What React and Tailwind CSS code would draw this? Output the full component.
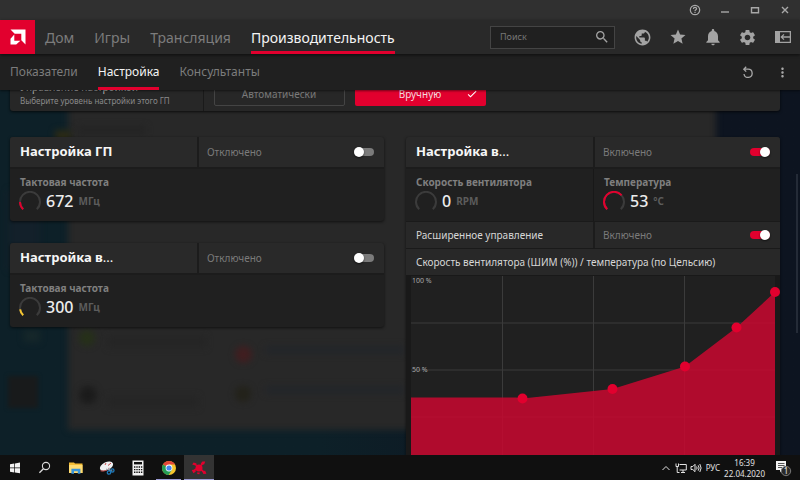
import { useState } from "react";
import {
  MdCheck,
  MdMoreVert,
  MdNotifications,
  MdPublic,
  MdSearch,
  MdSettings,
  MdStar,
} from "react-icons/md";

const MAIN_TABS = ["Дом", "Игры", "Трансляция", "Производительность"];
const SUB_TABS = ["Показатели", "Настройка", "Консультанты"];

function Logo() {
  return (
    <svg viewBox="0 0 16 16" className="size-4 fill-white">
      <path d="M0.5 0.5H15.5V15.5L11.3 11.3V4.7H4.7Z" />
      <path d="M4.3 5.6V11.7H10.4L6.2 15.5H0.5V9.8Z" />
    </svg>
  );
}

function TitleBar() {
  const button = "flex h-5 w-[30px] items-center justify-center text-[#a8a8a8]";
  return (
    <div className="flex h-5 shrink-0 justify-end bg-[#303030]">
      <button aria-label="Справка" className={button}>
        <svg viewBox="0 0 12 12" className="size-3 fill-none stroke-current stroke-[1.2]">
          <circle cx="6" cy="6" r="4.7" />
          <path d="M4.4 4.9C4.4 2.9 7.6 2.9 7.6 4.8C7.6 5.9 6 5.8 6 7.2M6 8V9.1" />
        </svg>
      </button>
      <button aria-label="Свернуть" className={button}>
        <svg viewBox="0 0 12 12" className="size-3 fill-none stroke-current stroke-[1.4]">
          <path d="M2 8H10" />
        </svg>
      </button>
      <button aria-label="Развернуть" className={button}>
        <svg viewBox="0 0 12 12" className="size-3 fill-none stroke-current stroke-[1.4]">
          <path d="M2.5 3.7H9.5V8.8H2.5Z" />
        </svg>
      </button>
      <button aria-label="Закрыть" className={button}>
        <svg viewBox="0 0 12 12" className="size-3 fill-none stroke-current stroke-[1.4]">
          <path d="M3 3L9 9M9 3L3 9" />
        </svg>
      </button>
    </div>
  );
}

function Header() {
  const icon = "flex h-full w-[35px] items-center justify-center text-[#a3a3a3]";
  return (
    <header className="relative z-20 flex h-[34px] shrink-0 items-center bg-[#292929] shadow-[0_1px_3px_rgba(0,0,0,0.6)]">
      <a href="#home" aria-label="AMD" className="flex h-full w-[35px] items-center justify-center bg-[#e2002e]">
        <Logo />
      </a>
      <nav className="flex h-full gap-5 pl-[10px]">
        {MAIN_TABS.map((tab, i) => (
          <a
            key={tab}
            href="#tab"
            className={`flex h-full items-center border-y-[3px] border-t-transparent text-[14px] ${
              i === 3 ? "border-b-[#e2002e] text-[#f4f4f4]" : "border-b-transparent text-[#7c7c7c]"
            }`}
          >
            {tab}
          </a>
        ))}
      </nav>
      <div className="ml-auto flex h-[23px] w-[125px] items-center border border-[#444] bg-[#202020] pr-1 pl-[9px]">
        <input
          aria-label="Поиск"
          placeholder="Поиск"
          className="min-w-0 flex-1 bg-transparent text-[9px] text-white outline-none placeholder:text-[#777]"
        />
        <MdSearch className="size-4 text-[#a3a3a3]" />
      </div>
      <div className="flex h-full pl-[10px]">
        <button aria-label="Браузер" className={icon}>
          <MdPublic className="size-[19px]" />
        </button>
        <button aria-label="Избранное" className={icon}>
          <MdStar className="size-[18px]" />
        </button>
        <button aria-label="Уведомления" className={icon}>
          <MdNotifications className="size-5" />
        </button>
        <button aria-label="Параметры" className={icon}>
          <MdSettings className="size-[19px]" />
        </button>
        <button aria-label="Боковая панель" className={icon}>
          <svg viewBox="0 0 16 12" className="h-3 w-4 fill-none stroke-current">
            <path d="M0 0H5V12H0Z" className="fill-current stroke-none" />
            <path d="M4 0.6H15.4V11.4H4M6 6H15M9 3.4L6.3 6L9 8.6" className="stroke-[1.3]" />
          </svg>
        </button>
      </div>
    </header>
  );
}

function SubNav() {
  return (
    <div className="relative z-10 flex h-9 shrink-0 items-center bg-[#202020] pl-[10px] shadow-[0_1px_2px_rgba(0,0,0,0.5)]">
      <nav className="flex h-full gap-5">
        {SUB_TABS.map((tab, i) => (
          <a
            key={tab}
            href="#section"
            className={`flex h-full items-center border-y-[3px] border-t-transparent text-[12px] ${
              i === 1 ? "border-b-[#e2002e] text-[#f4f4f4]" : "border-b-transparent text-[#7c7c7c]"
            }`}
          >
            {tab}
          </a>
        ))}
      </nav>
      <div className="ml-auto flex h-full text-[#a8a8a8]">
        <button aria-label="Сброс" className="flex w-[35px] items-center justify-center">
          <svg viewBox="0 0 12 12" className="size-3 fill-none stroke-current stroke-[1.3]">
            <path d="M2 8A4.1 4.1 0 1 0 6 3.2H2M4.2 0.8L1.8 3.2L4.2 5.6" />
          </svg>
        </button>
        <button aria-label="Ещё" className="flex w-[35px] items-center justify-center">
          <MdMoreVert className="size-[15px]" />
        </button>
      </div>
    </div>
  );
}

/* Blurred desktop seen through the window */
function Backdrop() {
  return (
    <div aria-hidden="true" className="absolute inset-0 overflow-hidden bg-linear-to-r from-[#0d2028] from-40% to-[#0d1420] to-75%">
      <div className="absolute -top-5 left-[68px] h-[360px] w-[648px] bg-[#282828] blur-[3px]" />
      <div className="absolute top-[100px] left-[8px] h-20 w-8 bg-[#13202a] blur-[3px]" />
      <div className="absolute top-[40px] left-[55px] h-3 w-4 bg-[#2b2a16] blur-[3px]" />
      <div className="absolute top-[240px] left-[24px] h-3 w-4 bg-[#16272a] blur-[3px]" />
      <div className="absolute top-[286px] left-[8px] h-8 w-[30px] bg-[#181a1b] blur-[2px]" />
      <div className="absolute top-[240px] left-[79px] size-4 rounded-full bg-[#263019] blur-[3px]" />
      <div className="absolute top-[296px] left-[79px] size-[18px] rounded-full bg-[#1b1b1b] blur-[3px]" />
      <div className="absolute top-[256px] left-[235px] size-[17px] rounded-full bg-[#401e20] blur-[3px]" />
      <div className="absolute top-[296px] left-[235px] size-4 rounded-full bg-[#23221a] blur-[3px]" />
      <div className="absolute top-[36px] left-[78px] h-2 w-[68px] bg-[#242424] blur-[3px]" />
      <div className="absolute top-[246px] left-[108px] h-3 w-[98px] bg-[#252525] blur-[3px]" />
      <div className="absolute top-[306px] left-[108px] h-3 w-[90px] bg-[#252525] blur-[3px]" />
      <div className="absolute top-[256px] left-[265px] h-2 w-[140px] bg-[#23262a] blur-[3px]" />
      <div className="absolute top-[296px] left-[265px] h-2 w-[140px] bg-[#23262a] blur-[3px]" />
    </div>
  );
}

function SwitchField({ id, initial }) {
  const [on, setOn] = useState(initial);
  return (
    <div className="flex w-1/2 items-center justify-between border-l-2 border-[#1c1c1c] pr-[10px] pl-2">
      <label htmlFor={id} className="text-[10px] text-[#7a7a7a]">
        {on ? "Включено" : "Отключено"}
      </label>
      <input
        id={id}
        type="checkbox"
        role="switch"
        checked={on}
        onChange={() => setOn(!on)}
        className="flex h-2 w-5 appearance-none items-center rounded-full bg-[#7b7b7b] before:size-[10px] before:shrink-0 before:rounded-full before:bg-white before:shadow-[0_1px_2px_rgba(0,0,0,0.6)] checked:bg-[#e2002e] checked:before:ml-[10px]"
      />
    </div>
  );
}

function CardHeader({ id, title, cut, on }) {
  return (
    <div className="flex h-8 border-b-2 border-[#1c1c1c] bg-[#292929]">
      <h2 className="flex w-1/2 items-center pl-[10px] text-[13px] font-bold text-[#f6f6f6]">
        {title}
        {cut && <span className="font-normal">...</span>}
      </h2>
      <SwitchField id={id} initial={on} />
    </div>
  );
}

/* Open ring that fills clockwise from its lower left end */
function Gauge({ value, color }) {
  const arc = "M4.2 18.2A10 10 0 1 1 17.8 18.2";
  return (
    <svg viewBox="0 0 22 20" className="h-5 w-[22px] fill-none stroke-2">
      <path d={arc} stroke="#3b3b3b" />
      {value > 0 && <path d={arc} stroke={color} pathLength="100" strokeDasharray={`${value} 100`} />}
    </svg>
  );
}

function Stat({ label, value, unit, fill, color }) {
  return (
    <div className="flex h-[52px] flex-col px-[10px] pt-1.5">
      <div className="text-[10px] leading-[14px] font-bold text-[#7f7f7f]">{label}</div>
      <div className="-ml-px flex h-6 items-center gap-[5px]">
        <Gauge value={fill} color={color} />
        <span className="text-[16px] font-medium text-[#ececec]">{value}</span>
        <span className="text-[10px] font-bold text-[#5c5c5c]">{unit}</span>
      </div>
    </div>
  );
}

const CARD = "overflow-hidden rounded-[3px] bg-[#202020] shadow-[0_1px_3px_rgba(0,0,0,0.6)]";

function ClockCard({ id, title, cut, value, fill, color }) {
  return (
    <section className={CARD}>
      <CardHeader id={id} title={title} cut={cut} on={false} />
      <Stat label="Тактовая частота" value={value} unit="МГц" fill={fill} color={color} />
    </section>
  );
}

const POINTS = [
  [111.5, 122.5],
  [201.5, 113],
  [274, 90.5],
  [325.5, 51.5],
  [364, 16],
];

function FanChart() {
  const line = POINTS.map((p) => p.join(" ")).join("L");
  return (
    <div className="bg-[#191919] px-[5px] pt-px">
      <svg viewBox="0 0 364 188" className="block w-full overflow-visible bg-[#202020]">
        <path d="M91.5 0V188M182.5 0V188M273.5 0V188M0 47H364M0 94H364M0 141H364" className="fill-none stroke-[#3b3b3b]" />
        <path d={`M0 121.5H105L${line}V188H0Z`} className="fill-[#ca0830]/85" />
        {POINTS.map(([x, y]) => (
          <circle key={x} cx={x} cy={y} r="5" className="fill-[#e2002e]" />
        ))}
        <text x="1" y="7" className="fill-[#a8a8a8] text-[7px]">100 %</text>
        <text x="1" y="96" className="fill-[#a8a8a8] text-[7px]">50 %</text>
      </svg>
    </div>
  );
}

function FanCard() {
  return (
    <section className={CARD}>
      <CardHeader id="fan" title="Настройка в" cut on />
      <div className="flex">
        <div className="w-1/2">
          <Stat label="Скорость вентилятора" value="0" unit="RPM" fill={0} />
        </div>
        <div className="w-1/2 border-l border-[#181818]">
          <Stat label="Температура" value="53" unit="°C" fill={68} color="#e2002e" />
        </div>
      </div>
      <div className="flex h-7 border-y border-[#1a1a1a] bg-[#282828]">
        <div className="flex w-1/2 items-center pl-[10px] text-[10px] text-[#d6d6d6]">Расширенное управление</div>
        <SwitchField id="advanced" initial />
      </div>
      <div className="flex h-[26px] items-center bg-[#282828] pl-[10px] text-[10px] whitespace-nowrap text-[#d6d6d6]">
        Скорость вентилятора (ШИМ (%)) / температура (по Цельсию)
      </div>
      <FanChart />
    </section>
  );
}

function TuningControl() {
  return (
    <section className="-mt-4 flex h-[37px] rounded-[3px] bg-[#272727] shadow-[0_1px_3px_rgba(0,0,0,0.7)]">
      <div className="w-1/4 pt-1.5 pl-[10px] whitespace-nowrap">
        <div className="text-[10px] leading-[14px] text-[#b5b5b5]">Управление настройкой</div>
        <div className="text-[8px] leading-[14px] text-[#8a8a8a]">Выберите уровень настройки этого ГП</div>
      </div>
      <div className="flex flex-1 gap-[10px] border-l border-[#1a1a1a] pb-[5px] pl-[10px]">
        <button className="h-8 w-[131px] rounded-[2px] border border-[#444] pt-2 text-[10px] leading-[22px] text-[#7a7a7a]">
          Автоматически
        </button>
        <button className="grid h-8 w-[131px] grid-cols-[1fr_auto_1fr] items-center rounded-[2px] bg-[#e2002e] px-2 pt-2 text-[10px] leading-[22px] text-[#f3d9de]">
          <span />
          Вручную
          <MdCheck className="size-3 justify-self-end text-white" />
        </button>
      </div>
    </section>
  );
}

function TaskIcon({ label, className = "w-[31px]", children }) {
  return (
    <button aria-label={label} className={`flex h-full items-center justify-center ${className}`}>
      <svg viewBox="0 0 16 16" className="size-4 fill-none">
        {children}
      </svg>
    </button>
  );
}

function Taskbar() {
  return (
    <footer className="relative z-20 flex h-[25px] shrink-0 items-center bg-[#101010] text-[#e2e2e2]">
      <TaskIcon label="Пуск" className="w-[30px]">
        <path d="M3 4.2L7.3 3.5V7.6H3ZM8 3.4L13 2.6V7.6H8ZM3 8.3H7.3V12.4L3 11.7ZM8 8.3H13V13.3L8 12.5Z" fill="#f2f2f2" />
      </TaskIcon>
      <TaskIcon label="Поиск" className="w-[30px]">
        <circle cx="9" cy="6" r="3.6" stroke="#dadada" strokeWidth="1.1" />
        <path d="M6.4 8.7L2.4 12.8" stroke="#dadada" strokeWidth="1.3" />
      </TaskIcon>
      <TaskIcon label="Проводник">
        <path d="M1 2.5H6L7 3.5H14.5V13H1Z" fill="#f5bd35" />
        <path d="M1 5H14.5V13H1Z" fill="#ffdc72" />
        <path d="M3.4 13.8V8.8H12.4V13.8H9.8V11.3H6V13.8Z" fill="#3994d9" />
      </TaskIcon>
      <TaskIcon label="Ножницы">
        <ellipse cx="7.5" cy="6.2" rx="7" ry="4" transform="rotate(-25 7.5 6.2)" fill="#eef0f2" />
        <path d="M1.5 10.8C4.5 12 8.8 9.7 10.2 8.5M6 5L7 3M9 5.5L12 3" stroke="#c44848" strokeWidth="1" />
        <path d="M7 9L13.5 11M10 7.7L10.5 11" stroke="#9eacb5" />
        <circle cx="10" cy="12.5" r="1.7" stroke="#1e78b8" strokeWidth="1.3" />
        <circle cx="13.4" cy="10.5" r="1.6" stroke="#1e78b8" strokeWidth="1.3" />
      </TaskIcon>
      <TaskIcon label="Калькулятор">
        <path d="M2.5 0.5H13.5V15.5H2.5Z" fill="#f2f2f2" />
        <path d="M4 2H12V4.4H4Z" fill="#111" />
        <path d="M4 7H12.4M4 9.6H12.4M4 12.2H12.4" stroke="#111" strokeWidth="1.4" strokeDasharray="1.4 0.9" />
      </TaskIcon>
      <TaskIcon label="Chrome" className="mx-[3px] w-[25px] border-y border-t-transparent border-b-[#9c9dd6]">
        <circle cx="8" cy="8" r="7" fill="#f5c52c" />
        <path d="M8 8L1.9 4.5A7 7 0 0 1 14.1 4.6H8Z" fill="#e2463a" />
        <path d="M8 8L1.9 4.5A7 7 0 0 0 7.6 15L11 9.7Z" fill="#259c55" />
        <circle cx="8" cy="8" r="3.4" fill="#fff" />
        <circle cx="8" cy="8" r="2.6" fill="#4687ef" />
      </TaskIcon>
      <TaskIcon label="Radeon" className="w-[30px] border-y border-t-[#333] border-b-[#9c9dd6] bg-[#333]">
        <circle cx="8" cy="8" r="3.5" fill="#e2002e" />
        <path d="M5.8 5.8L4.2 4.2M10 5.6L11.2 4M5.2 9L3.4 10.2M10.4 9.8L12.4 11.6" stroke="#e2002e" strokeWidth="1.6" />
        <path
          d="M1.2 4.6L2.6 2.4L5.6 3.4L4.4 5.6ZM9.8 3.6L11.4 1.6L14.2 1.6L13.2 4.2L11 5ZM0.8 10L4.2 9.4L4.8 11.4L2.4 13.2ZM11 11L14.2 10.8L15.4 13.8L12.4 14ZM6 12.4L8.8 12.4L8.4 14.2L6.4 14Z"
          fill="#e2002e"
        />
      </TaskIcon>
      <div className="ml-auto flex h-full items-center gap-[3px] pr-2 text-[8px]">
        <svg viewBox="0 0 12 12" className="size-3 fill-none stroke-current">
          <path d="M2.5 8L6 4.5L9.5 8" />
        </svg>
        <svg viewBox="0 0 12 12" className="size-3 fill-none stroke-current">
          <path d="M4.5 2.5H11.3V8H4.5M6 10.5H10M8 8V10.5M1 1.5V4.5H3.5V1.5M2.2 4.5V10.5H4.5" />
        </svg>
        <svg viewBox="0 0 12 12" className="size-3 fill-none stroke-current">
          <path d="M1 4.5H2.8L5 2.3V9.7L2.8 7.5H1ZM6.6 4.5Q7.6 6 6.6 7.5M8.2 3.3Q10 6 8.2 8.7M9.8 2Q12.4 6 9.8 10" />
        </svg>
        <span className="px-px">РУС</span>
        <time className="text-center leading-[11px]">
          <span className="block">16:39</span>
          <span className="block">22.04.2020</span>
        </time>
        <button aria-label="Уведомления: 1" className="pl-1.5">
          <svg viewBox="0 0 18 18" className="size-[18px]">
            <path d="M2 2H12V11H8L6 13.5V11H2Z" className="fill-[#f2f2f2]" />
            <path d="M4 4.5H10.5M4 6.5H10.5M4 8.5H8" className="stroke-[#555]" />
            <circle cx="12" cy="12" r="4.7" className="fill-[#292929] stroke-[#777]" />
            <text x="12" y="15" textAnchor="middle" className="fill-[#eee] text-[8px]">1</text>
          </svg>
        </button>
      </div>
    </footer>
  );
}

export default function App() {
  return (
    <div className="flex h-screen flex-col overflow-hidden bg-[#202020] font-['Noto_Sans','Open_Sans',sans-serif]">
      <TitleBar />
      <Header />
      <SubNav />
      <main className="relative min-h-0 flex-1 overflow-hidden">
        <Backdrop />
        <div className="relative flex flex-col gap-[26px] pr-5 pl-[10px]">
          <TuningControl />
          <div className="grid grid-cols-2 items-start gap-[22px]">
            <div className="flex flex-col gap-[22px]">
              <ClockCard id="gpu" title="Настройка ГП" value="672" fill={17} color="#e2002e" />
              <ClockCard id="vram" title="Настройка в" cut value="300" fill={14} color="#f7c62f" />
            </div>
            <FanCard />
          </div>
        </div>
        <div className="absolute top-[84px] right-[2px] h-[159px] w-[2px] bg-[#242b37]" />
      </main>
      <Taskbar />
    </div>
  );
}
